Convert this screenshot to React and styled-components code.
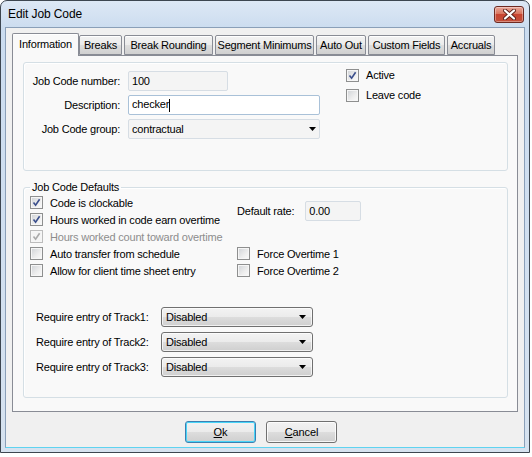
import React from 'react';
import styled, { createGlobalStyle } from 'styled-components';

const GlobalStyle = createGlobalStyle`
  html, body { margin: 0; padding: 0; background: #fff; }
  body {
    font-family: "Liberation Sans", Arial, sans-serif;
    font-size: 11px;
    color: #000;
  }
  * { box-sizing: border-box; }
`;

const Window = styled.div`
  width: 530px;
  height: 453px;
  border: 1px solid #3d4650;
  border-radius: 7px 7px 0 0;
  background: linear-gradient(#dde8f5, #cbdcef 28px, #d6e2ef);
  padding: 0 4px 4px;
  display: flex;
  flex-direction: column;
`;

const TitleBar = styled.div`
  height: 26px;
  display: flex;
  justify-content: space-between;
  align-items: flex-start;
  padding-left: 3px;
`;

const Title = styled.span`
  font-size: 12px;
  line-height: 26px;
  letter-spacing: -0.1px;
`;

const CloseButton = styled.div`
  width: 30px;
  height: 17px;
  margin: 5px 1px 0 0;
  border: 1px solid #6e2a22;
  border-radius: 3px;
  background: linear-gradient(#e9a89b, #d9765f 45%, #c84430 50%, #c2503b);
  box-shadow: inset 0 0 0 1px rgba(255, 255, 255, 0.35);
  display: flex;
  align-items: center;
  justify-content: center;
`;

const Client = styled.div`
  flex: 1;
  border: 1px solid #8a9fb8;
  border-bottom-color: #5fd3f0;
  background: #f0f0f0;
  padding: 5px 6px 0 6px;
  display: flex;
  flex-direction: column;
`;

const TabStrip = styled.div`
  height: 22px;
  display: flex;
  align-items: flex-end;
`;

const Tab = styled.div`
  width: ${p => p.$w}px;
  margin-left: ${p => p.$gap}px;
  height: ${p => (p.$active ? 23 : 20)}px;
  margin-bottom: ${p => (p.$active ? -1 : 0)}px;
  position: relative;
  z-index: ${p => (p.$active ? 1 : 0)};
  border: 1px solid #898c95;
  border-bottom: ${p => (p.$active ? 'none' : '1px solid #898c95')};
  border-radius: 2px 2px 0 0;
  background: ${p =>
    p.$active
      ? '#f9f9f9'
      : 'linear-gradient(#f3f3f3, #ebebeb 50%, #dedede 50%, #d0d0d0)'};
  box-shadow: inset 0 1px 0 #fff;
  display: flex;
  align-items: center;
  justify-content: center;
  padding-bottom: ${p => (p.$active ? 2 : 0)}px;
  white-space: nowrap;
  letter-spacing: -0.2px;
`;

const Panel = styled.div`
  height: 357px;
  border: 1px solid #898c95;
  background: #f9f9f9;
  padding: 6px 9px 0 10px;
`;

const GroupBox = styled.div`
  height: 109px;
  border: 1px solid #d5dfe5;
  border-radius: 3px;
  box-shadow: inset 1px 1px 0 #fff;
  padding: 8px 6px;
  display: flex;
  align-items: flex-start;
`;

const FieldGrid = styled.div`
  display: grid;
  grid-template-columns: 90px 192px;
  column-gap: 8px;
  row-gap: 4px;
  align-items: center;
`;

const FieldLabel = styled.label`
  text-align: right;
  white-space: nowrap;
  letter-spacing: -0.2px;
`;

const TextBox = styled.div`
  width: ${p => p.$w || 192}px;
  height: 20px;
  border: 1px solid ${p => (p.$focus ? '#a9c1d8' : '#d6dde4')};
  border-radius: 2px;
  background: ${p => (p.$focus ? '#fff' : '#f4f4f4')};
  padding: 0 3px;
  display: flex;
  align-items: center;
  justify-content: space-between;
  letter-spacing: -0.2px;
`;

const Caret = styled.span`
  display: inline-block;
  width: 1px;
  height: 13px;
  background: #000;
  vertical-align: middle;
`;

const CheckList = styled.div`
  margin: -2px 0 0 26px;
  display: flex;
  flex-direction: column;
`;

const CheckRow = styled.div`
  height: ${p => p.$h || 17}px;
  display: flex;
  align-items: ${p => (p.$top ? 'flex-start' : 'center')};
  gap: 7px;
  white-space: nowrap;
  letter-spacing: -0.2px;
  color: ${p => (p.$disabled ? '#8d8d8d' : '#000')};
`;

const Box = styled.span`
  width: 13px;
  height: 13px;
  flex: none;
  border: 1px solid ${p => (p.$disabled ? '#bcbcbc' : '#8e8f8f')};
  background: ${p =>
    p.$disabled
      ? '#f4f4f4'
      : 'linear-gradient(135deg, #cfd2d6, #eeeeee 60%, #fbfbfb)'};
  box-shadow: inset 0 0 0 1px #f6f6f6;
  display: flex;
  align-items: center;
  justify-content: center;
`;

const Fieldset = styled.fieldset`
  margin: 10px 0 0;
  height: 217px;
  min-width: 0;
  border: 1px solid #d5dfe5;
  border-radius: 3px;
  box-shadow: inset 1px 1px 0 #fff;
  padding: 0 6px;
`;

const Legend = styled.legend`
  margin-left: 0;
  padding: 0 2px;
  line-height: 13px;
  letter-spacing: -0.2px;
`;

const DefaultsGrid = styled.div`
  display: grid;
  grid-template-columns: 207px auto;
  grid-auto-rows: 17px;
`;

const RateCell = styled.div`
  grid-column: 2;
  grid-row: 1 / 3;
  display: flex;
  align-items: center;
  gap: 11px;
  letter-spacing: -0.2px;
`;

const TrackList = styled.div`
  margin: 28px 0 0 6px;
  display: flex;
  flex-direction: column;
  gap: 5px;
`;

const TrackRow = styled.div`
  display: grid;
  grid-template-columns: 125px 152px;
  align-items: center;
  letter-spacing: -0.2px;
`;

const DropButton = styled.div`
  height: 20px;
  border: 1px solid #707070;
  border-radius: 3px;
  background: linear-gradient(#f3f3f3, #ebebeb 50%, #dddddd 50%, #cfcfcf);
  box-shadow: inset 0 0 0 1px rgba(255, 255, 255, 0.7);
  padding: 0 6px 0 4px;
  display: flex;
  align-items: center;
  justify-content: space-between;
`;

const ButtonRow = styled.div`
  margin-top: 9px;
  display: flex;
  justify-content: center;
  gap: 10px;
  padding-right: 8px;
`;

const Button = styled.div`
  width: 71px;
  height: 22px;
  border: 1px solid ${p => (p.$default ? '#3c7fb1' : '#707070')};
  border-radius: 3px;
  background: linear-gradient(#f2f2f2, #ebebeb 50%, #dddddd 50%, #cfcfcf);
  box-shadow: inset 0 0 0 1px
    ${p => (p.$default ? '#48d5f8' : 'rgba(255, 255, 255, 0.8)')};
  display: flex;
  align-items: center;
  justify-content: center;
  letter-spacing: -0.1px;
`;

const Arrow = () => (
  <svg width="7" height="4" viewBox="0 0 7 4">
    <path d="M0 0 H7 L3.5 4 Z" fill="#000" />
  </svg>
);

const Check = ({ checked, disabled }) => (
  <Box $disabled={disabled}>
    {checked && (
      <svg width="9" height="9" viewBox="0 0 9 9">
        <path
          d="M1.5 4.5 L3.6 7.2 L7.6 1.2"
          fill="none"
          stroke={disabled ? '#a9a9a9' : '#3b4f8c'}
          strokeWidth="1.6"
        />
      </svg>
    )}
  </Box>
);

const CheckItem = ({ label, checked, disabled }) => (
  <CheckRow $disabled={disabled}>
    <Check checked={checked} disabled={disabled} />
    <span>{label}</span>
  </CheckRow>
);

const tabs = [
  { label: 'Information', w: 67, gap: 0, active: true },
  { label: 'Breaks', w: 43, gap: 0 },
  { label: 'Break Rounding', w: 89, gap: 2 },
  { label: 'Segment Minimums', w: 99, gap: 2 },
  { label: 'Auto Out', w: 50, gap: 2 },
  { label: 'Custom Fields', w: 77, gap: 2 },
  { label: 'Accruals', w: 48, gap: 2 },
];

const defaults = [
  { label: 'Code is clockable', checked: true },
  { label: 'Hours worked in code earn overtime', checked: true },
  { label: 'Hours worked count toward overtime', checked: true, disabled: true },
  { label: 'Auto transfer from schedule' },
  { label: 'Allow for client time sheet entry' },
];

export default function App() {
  return (
    <>
      <GlobalStyle />
      <Window>
        <TitleBar>
          <Title>Edit Job Code</Title>
          <CloseButton>
            <svg width="13" height="11" viewBox="0 0 13 11">
              <path
                d="M2 1.5 L11 9.5 M11 1.5 L2 9.5"
                stroke="#5a2019"
                strokeWidth="4"
                strokeLinecap="round"
              />
              <path
                d="M2 1.5 L11 9.5 M11 1.5 L2 9.5"
                stroke="#fff"
                strokeWidth="2.2"
                strokeLinecap="round"
              />
            </svg>
          </CloseButton>
        </TitleBar>

        <Client>
          <TabStrip>
            {tabs.map(t => (
              <Tab key={t.label} $w={t.w} $gap={t.gap} $active={t.active}>
                {t.label}
              </Tab>
            ))}
          </TabStrip>

          <Panel>
            <GroupBox>
              <FieldGrid>
                <FieldLabel>Job Code number:</FieldLabel>
                <TextBox $w={100}>100</TextBox>
                <FieldLabel>Description:</FieldLabel>
                <TextBox $focus>
                  <span>
                    checker<Caret />
                  </span>
                </TextBox>
                <FieldLabel>Job Code group:</FieldLabel>
                <TextBox>
                  <span>contractual</span>
                  <Arrow />
                </TextBox>
              </FieldGrid>
              <CheckList>
                <CheckRow $h={20} $top>
                  <Check checked />
                  <span>Active</span>
                </CheckRow>
                <CheckRow $h={20} $top>
                  <Check />
                  <span>Leave code</span>
                </CheckRow>
              </CheckList>
            </GroupBox>

            <Fieldset>
              <Legend>Job Code Defaults</Legend>
              <DefaultsGrid>
                {defaults.map(d => (
                  <div key={d.label} style={{ gridColumn: 1 }}>
                    <CheckItem {...d} />
                  </div>
                ))}
                <RateCell>
                  <span>Default rate:</span>
                  <TextBox $w={56}>0.00</TextBox>
                </RateCell>
                <div style={{ gridColumn: 2, gridRow: 4 }}>
                  <CheckItem label="Force Overtime 1" />
                </div>
                <div style={{ gridColumn: 2, gridRow: 5 }}>
                  <CheckItem label="Force Overtime 2" />
                </div>
              </DefaultsGrid>

              <TrackList>
                {[1, 2, 3].map(n => (
                  <TrackRow key={n}>
                    <span>Require entry of Track{n}:</span>
                    <DropButton>
                      <span>Disabled</span>
                      <Arrow />
                    </DropButton>
                  </TrackRow>
                ))}
              </TrackList>
            </Fieldset>
          </Panel>

          <ButtonRow>
            <Button $default>
              <span><u>O</u>k</span>
            </Button>
            <Button>
              <span><u>C</u>ancel</span>
            </Button>
          </ButtonRow>
        </Client>
      </Window>
    </>
  );
}
